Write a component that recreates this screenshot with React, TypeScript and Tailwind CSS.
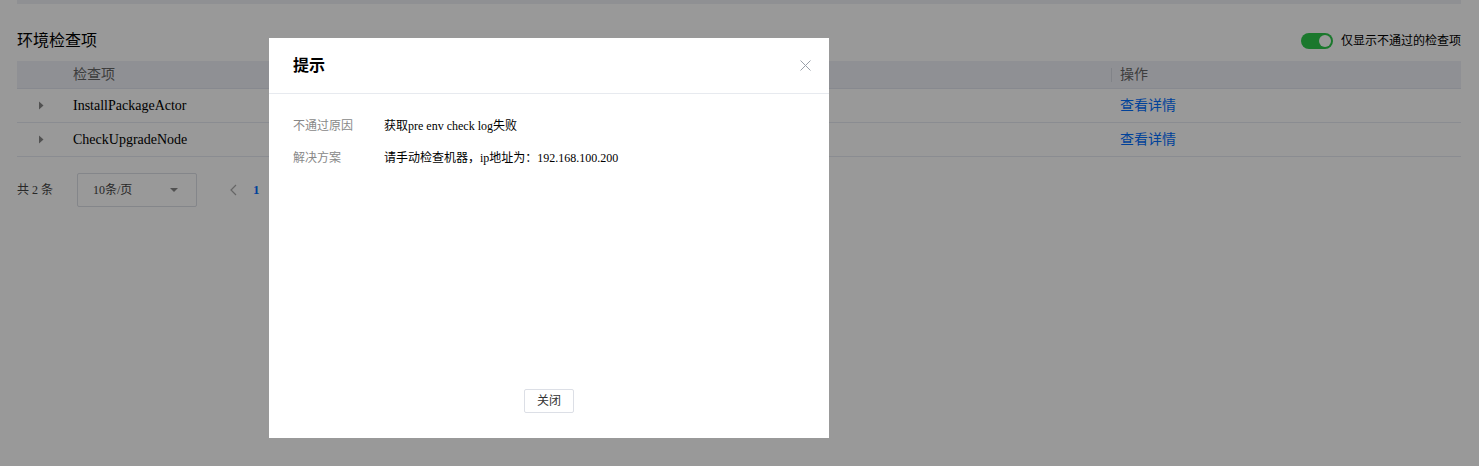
import React from "react";

const Caret = () => (
  <svg width="6" height="9" viewBox="0 0 6 9" className="block">
    <path d="M1 0.5 L5.5 4.5 L1 8.5 Z" fill="#888" />
  </svg>
);

const Row = ({ name }: { name: string }) => (
  <div className="flex items-center h-[34px] border-b border-[#e6e9f2] text-[14px] text-black">
    <div className="w-[56px] flex justify-start pl-[21px]">
      <Caret />
    </div>
    <div className="flex-1">{name}</div>
    <div className="w-[350px] pl-[9px] text-[#006eff]">查看详情</div>
  </div>
);

export default function App() {
  return (
    <div className="relative w-[1479px] h-[466px] bg-white overflow-hidden font-['Liberation_Serif','Noto_Sans_CJK_SC',serif]">
      <div className="px-[17px] w-[1478px]">
        <div className="h-[4px] bg-[#eef0f6]" />
        <div className="flex items-center justify-between mt-[25px] h-[24px]">
          <div className="text-[16px] text-black leading-none">环境检查项</div>
          <div className="flex items-center gap-[8px]">
            <div className="w-[32px] h-[16px] rounded-full bg-[#2dc94b] flex items-center justify-end pr-[2px]">
              <div className="w-[12px] h-[12px] rounded-full bg-white" />
            </div>
            <div className="text-[12px] text-black">仅显示不通过的检查项</div>
          </div>
        </div>
        <div className="mt-[8px]">
          <div className="flex items-center h-[28px] bg-[#eff1f7] border-b border-[#e2e5ee] text-[14px] text-[#666]">
            <div className="w-[56px]" />
            <div className="flex-1">检查项</div>
            <div className="w-[350px] flex items-center">
              <div className="w-px h-[14px] bg-[#d8dbe3] mr-[8px]" />
              <span>操作</span>
            </div>
          </div>
          <Row name="InstallPackageActor" />
          <Row name="CheckUpgradeNode" />
        </div>
        <div className="flex items-center mt-[16px] h-[34px] text-[12px] text-[#444]">
          <span>共 2 条</span>
          <div className="ml-[24px] w-[120px] h-[34px] border border-[#dcdfe6] rounded-[2px] flex items-center justify-between pl-[15px] pr-[18px]">
            <span>10条/页</span>
            <svg width="8" height="4" viewBox="0 0 8 4">
              <path d="M0 0 L8 0 L4 4 Z" fill="#888" />
            </svg>
          </div>
          <svg width="7" height="12" viewBox="0 0 7 12" className="ml-[33px]">
            <path d="M6 1 L1 6 L6 11" stroke="#aaa" strokeWidth="1.2" fill="none" />
          </svg>
          <span className="ml-[16px] text-[#006eff] font-bold text-[13px]">1</span>
        </div>
      </div>

      <div className="absolute inset-0 bg-black/40" />

      <div className="absolute left-[269px] top-[38px] w-[560px] h-[400px] bg-white flex flex-col">
        <div className="h-[56px] border-b border-[#e7eaef] flex items-center justify-between pl-[24px] pr-[18px]">
          <span className="text-[16px] font-bold text-black">提示</span>
          <svg width="11" height="11" viewBox="0 0 11 11">
            <path d="M0.5 0.5 L10.5 10.5 M10.5 0.5 L0.5 10.5" stroke="#9aa0aa" strokeWidth="1" />
          </svg>
        </div>
        <div className="flex-1 pt-[23px] pl-[24px] text-[12px]">
          <div className="flex items-center h-[18px]">
            <span className="w-[91px] text-[#888]">不通过原因</span>
            <span className="text-black">获取pre env check log失败</span>
          </div>
          <div className="flex items-center h-[18px] mt-[14px]">
            <span className="w-[91px] text-[#888]">解决方案</span>
            <span className="text-black">请手动检查机器，ip地址为：192.168.100.200</span>
          </div>
        </div>
        <div className="flex justify-center pb-[25px]">
          <button className="w-[50px] h-[24px] border border-[#dcdfe6] rounded-[2px] text-[12px] text-[#333] bg-white">
            关闭
          </button>
        </div>
      </div>
    </div>
  );
}
